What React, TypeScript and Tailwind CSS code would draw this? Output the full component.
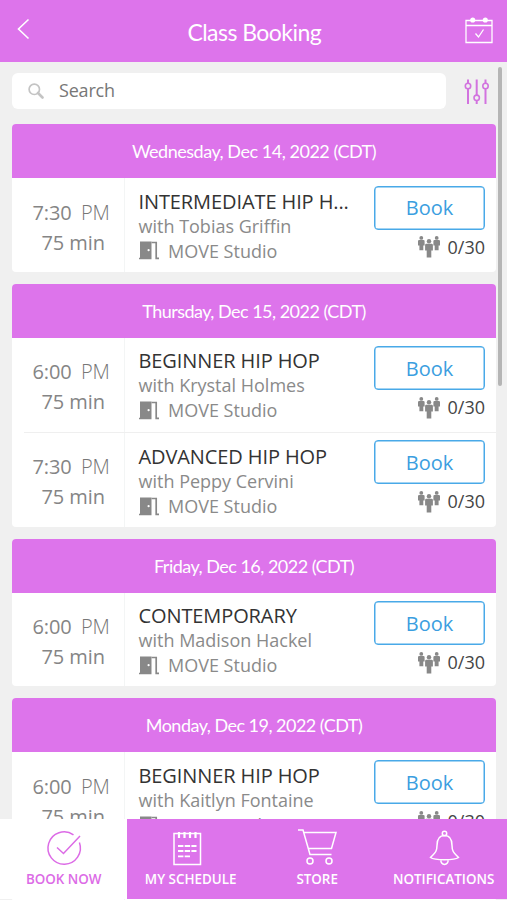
import React from 'react';

type ClassItem = { time: string; title: string; teacher: string; size: string; pad: string; timePad: string };
type Day = { label: string; track: string; items: ClassItem[] };

const days: Day[] = [
  {
    label: 'Wednesday, Dec 14, 2022 (CDT)',
    track: 'tracking-[-0.47px]',
    items: [{ time: '7:30', title: 'INTERMEDIATE HIP H...', teacher: 'Tobias Griffin', size: 'h-[94.5px]', pad: 'pt-[11px]', timePad: 'pt-[20px]' }],
  },
  {
    label: 'Thursday, Dec 15, 2022 (CDT)',
    track: 'tracking-[-0.52px]',
    items: [
      { time: '6:00', title: 'BEGINNER HIP HOP', teacher: 'Krystal Holmes', size: 'h-[94px]', pad: 'pt-[10px]', timePad: 'pt-[19px]' },
      { time: '7:30', title: 'ADVANCED HIP HOP', teacher: 'Peppy Cervini', size: 'h-[95px]', pad: 'pt-[12px]', timePad: 'pt-[20px]' },
    ],
  },
  {
    label: 'Friday, Dec 16, 2022 (CDT)',
    track: 'tracking-[-0.52px]',
    items: [{ time: '6:00', title: 'CONTEMPORARY', teacher: 'Madison Hackel', size: 'h-[93px]', pad: 'pt-[10px]', timePad: 'pt-[18.5px]' }],
  },
  {
    label: 'Monday, Dec 19, 2022 (CDT)',
    track: 'tracking-[-0.52px]',
    items: [{ time: '6:00', title: 'BEGINNER HIP HOP', teacher: 'Kaitlyn Fontaine', size: 'h-[150px]', pad: 'pt-[11px]', timePad: 'pt-[20px]' }],
  },
];

function DoorIcon() {
  return (
    <svg className="h-[19px] w-5 shrink-0" viewBox="0 0 20 19" fill="#888">
      <path d="M1 0.5H12.5V18.3H0V16.7H1Z" />
      <path d="M12.5 1.5H17.2V17.4H20" fill="none" stroke="#888" strokeWidth="1.7" />
      <circle cx="9.6" cy="9.2" r="1.1" fill="#fff" />
    </svg>
  );
}

function PeopleIcon() {
  return (
    <svg className="h-[22px] w-[22px]" viewBox="0 0 22 22" fill="#888">
      <circle cx="3.3" cy="1.9" r="1.9" />
      <path d="M1.2 3.9H5.4Q6.6 3.9 6.6 5.1V9.5H5.3V14.3H1.4V9.5H0V5.1Q0 3.9 1.2 3.9Z" />
      <circle cx="18.7" cy="1.9" r="1.9" />
      <path d="M16.6 3.9H20.8Q22 3.9 22 5.1V9.5H20.6V14.3H16.7V9.5H15.4V5.1Q15.4 3.9 16.6 3.9Z" />
      <circle cx="11" cy="5.2" r="2.2" />
      <path d="M8.5 7.7H13.5Q14.9 7.7 14.9 9.1V14.5H13.3V21.5H8.7V14.5H7.1V9.1Q7.1 7.7 8.5 7.7Z" />
    </svg>
  );
}

function ClassRow({ item, divided }: { item: ClassItem; divided: boolean }) {
  return (
    <div className={`relative flex ${item.size}`}>
      {divided && <div className="absolute top-0 right-0 left-3 h-px bg-[#efefef]" />}
      <div className={`w-[113px] shrink-0 border-r border-[#f3f5f5] text-[20px] leading-[30px] tracking-[-0.1px] text-[#858585] ${item.timePad}`}>
        <div className="flex pl-[20.5px]">
          <span className="w-[48.5px]">{item.time}</span>
          <span className="font-light text-[#777]">PM</span>
        </div>
        <div className="pl-[29.5px]">75 min</div>
      </div>
      <div className={`w-[225px] shrink-0 pl-[13.5px] text-[18px] leading-[25px] text-[#8a8a8a] ${item.pad}`}>
        <div className="text-[20px] tracking-[-0.1px] whitespace-nowrap text-[#333]">{item.title}</div>
        <div>with {item.teacher}</div>
        <div className="flex h-6 items-center gap-[9.5px]">
          <DoorIcon />
          <span className="leading-6">MOVE Studio</span>
        </div>
      </div>
      <div className="flex flex-1 flex-col items-end pt-[8px] pr-[11px]">
        <button className="h-[44px] w-[111px] rounded-[4px] border border-[#49a9e8] pt-px text-[20px] text-[#3b9ee0] shadow-[inset_0_0_0_0.5px_#49a9e8]">
          Book
        </button>
        <div className="mt-[5px] flex items-center gap-[8px] text-[18px] leading-[25px] text-[#454545]">
          <PeopleIcon />
          <span>0/30</span>
        </div>
      </div>
    </div>
  );
}

function NavItem({ label, active, children }: { label: string; active?: boolean; children: React.ReactNode }) {
  return (
    <div className={`flex shrink-0 flex-col items-center pt-[9px] ${active ? 'w-[127.4px] bg-white text-[#dc6be6]' : 'w-[126.5px] text-white'}`}>
      <svg className="h-[40px] w-[44px]" viewBox="0 0 44 40" fill="none" stroke="currentColor" strokeWidth="1.5">
        {children}
      </svg>
      <span className="mt-[1px] text-[13.4px] leading-[20px] font-semibold whitespace-nowrap">{label}</span>
    </div>
  );
}

export default function App() {
  return (
    <div className="relative h-[900px] w-[507px] overflow-hidden bg-[#f0f0f0] font-['Open_Sans',sans-serif]">
      <header className="flex h-[61.5px] items-center justify-between bg-[#dd74eb] pr-[14.5px] pl-[17px] text-white">
        <svg className="mb-[4px] h-[22px] w-[28px]" viewBox="0 0 28 22" fill="none" stroke="currentColor" strokeWidth="1.6">
          <path d="M11.5 1.5L1.5 11L11.5 20.5" />
        </svg>
        <h1 className="mt-[2px] mr-[1px] font-['Lato',sans-serif] text-[23px] tracking-[-0.55px]">Class Booking</h1>
        <svg className="mb-px h-[28px] w-[28px]" viewBox="0 0 28 28" fill="none" stroke="currentColor" strokeWidth="1.3">
          <path d="M1 4.5H27V26.5H1ZM1 9.5H27M10.5 17.5L13.5 21L18.5 13.5" />
          <circle cx="7.7" cy="4" r="1.9" fill="white" />
          <circle cx="20.3" cy="4" r="1.9" fill="white" />
        </svg>
      </header>

      <div className="flex h-[62px] items-start pt-[11px] pl-3">
        <div className="flex h-[36px] w-[433.5px] items-center rounded-[6px] bg-white pl-[16px] text-[18px] tracking-[-0.2px] text-[#777]">
          <svg className="mr-[15px] h-4 w-4" viewBox="0 0 16 16" fill="none" stroke="#c4c4c4">
            <circle cx="6.3" cy="6.3" r="5.2" strokeWidth="1.7" />
            <path d="M10 10L14.5 14.5" strokeWidth="2.6" strokeLinecap="round" />
          </svg>
          Search
        </div>
        <svg className="mt-[6px] ml-[18.5px] h-[26px] w-[25px]" viewBox="0 0 25 26" fill="none" stroke="#d273df" strokeWidth="2">
          <path d="M4 .5V4.5M4 9.5V25M12.7 .5V16M12.7 21.5V25M21.5 .5V4.5M21.5 9.5V25" />
          <g strokeWidth="1.6">
            <circle cx="4" cy="7" r="2.7" />
            <circle cx="12.7" cy="18.8" r="2.7" />
            <circle cx="21.5" cy="7" r="2.7" />
          </g>
        </svg>
      </div>

      <main className="flex flex-col gap-3 pl-3">
        {days.map((day) => (
          <section key={day.label} className="w-[484px] overflow-hidden rounded-[4px] bg-white">
            <h2 className={`flex h-[54px] items-center justify-center bg-[#dd74eb] pt-[1px] font-['Lato',sans-serif] text-[18px] text-white ${day.track}`}>
              {day.label}
            </h2>
            {day.items.map((item, i) => (
              <ClassRow key={item.title} item={item} divided={i > 0} />
            ))}
          </section>
        ))}
      </main>

      <div className="absolute top-[67px] right-[5px] h-[319px] w-[4px] rounded-full bg-[#b5b5b5]" />

      <nav className="absolute top-[819px] left-0 flex h-[80px] w-[507px] bg-[#dd74eb]">
        <NavItem label="BOOK NOW" active>
          <path d="M31.5 6.8A16.2 16.2 0 1 0 37.4 14.5M15 19.5L21.5 25.5L38 8" />
        </NavItem>
        <NavItem label="MY SCHEDULE">
          <path d="M5 5.5H31.5V36.5H5Z" />
          <path d="M10 4V10M15.5 4V10M21 4V10M26.5 4V10" strokeWidth="2.2" />
          <path d="M9 18H27.5M9 23H27.5M9 28.3H21" strokeDasharray="5.4 1.3" strokeWidth="1.8" />
        </NavItem>
        <NavItem label="STORE">
          <path d="M3 2H8L15 26.5H36.5M9 4.5H41L36.5 20.5H13.5" />
          <circle cx="15" cy="33" r="3" />
          <circle cx="34" cy="33" r="3" />
        </NavItem>
        <NavItem label="NOTIFICATIONS">
          <circle cx="22.5" cy="5.5" r="2.2" />
          <path d="M22.5 7.5C16.5 7.5 15 12.5 15 17.5C15 24.5 12 25.5 8.5 29.5C12.5 32.5 32.5 32.5 36.5 29.5C33 25.5 30 24.5 30 17.5C30 12.5 28.5 7.5 22.5 7.5M19 32A3.6 3.6 0 1 0 26 32" />
        </NavItem>
      </nav>
    </div>
  );
}
